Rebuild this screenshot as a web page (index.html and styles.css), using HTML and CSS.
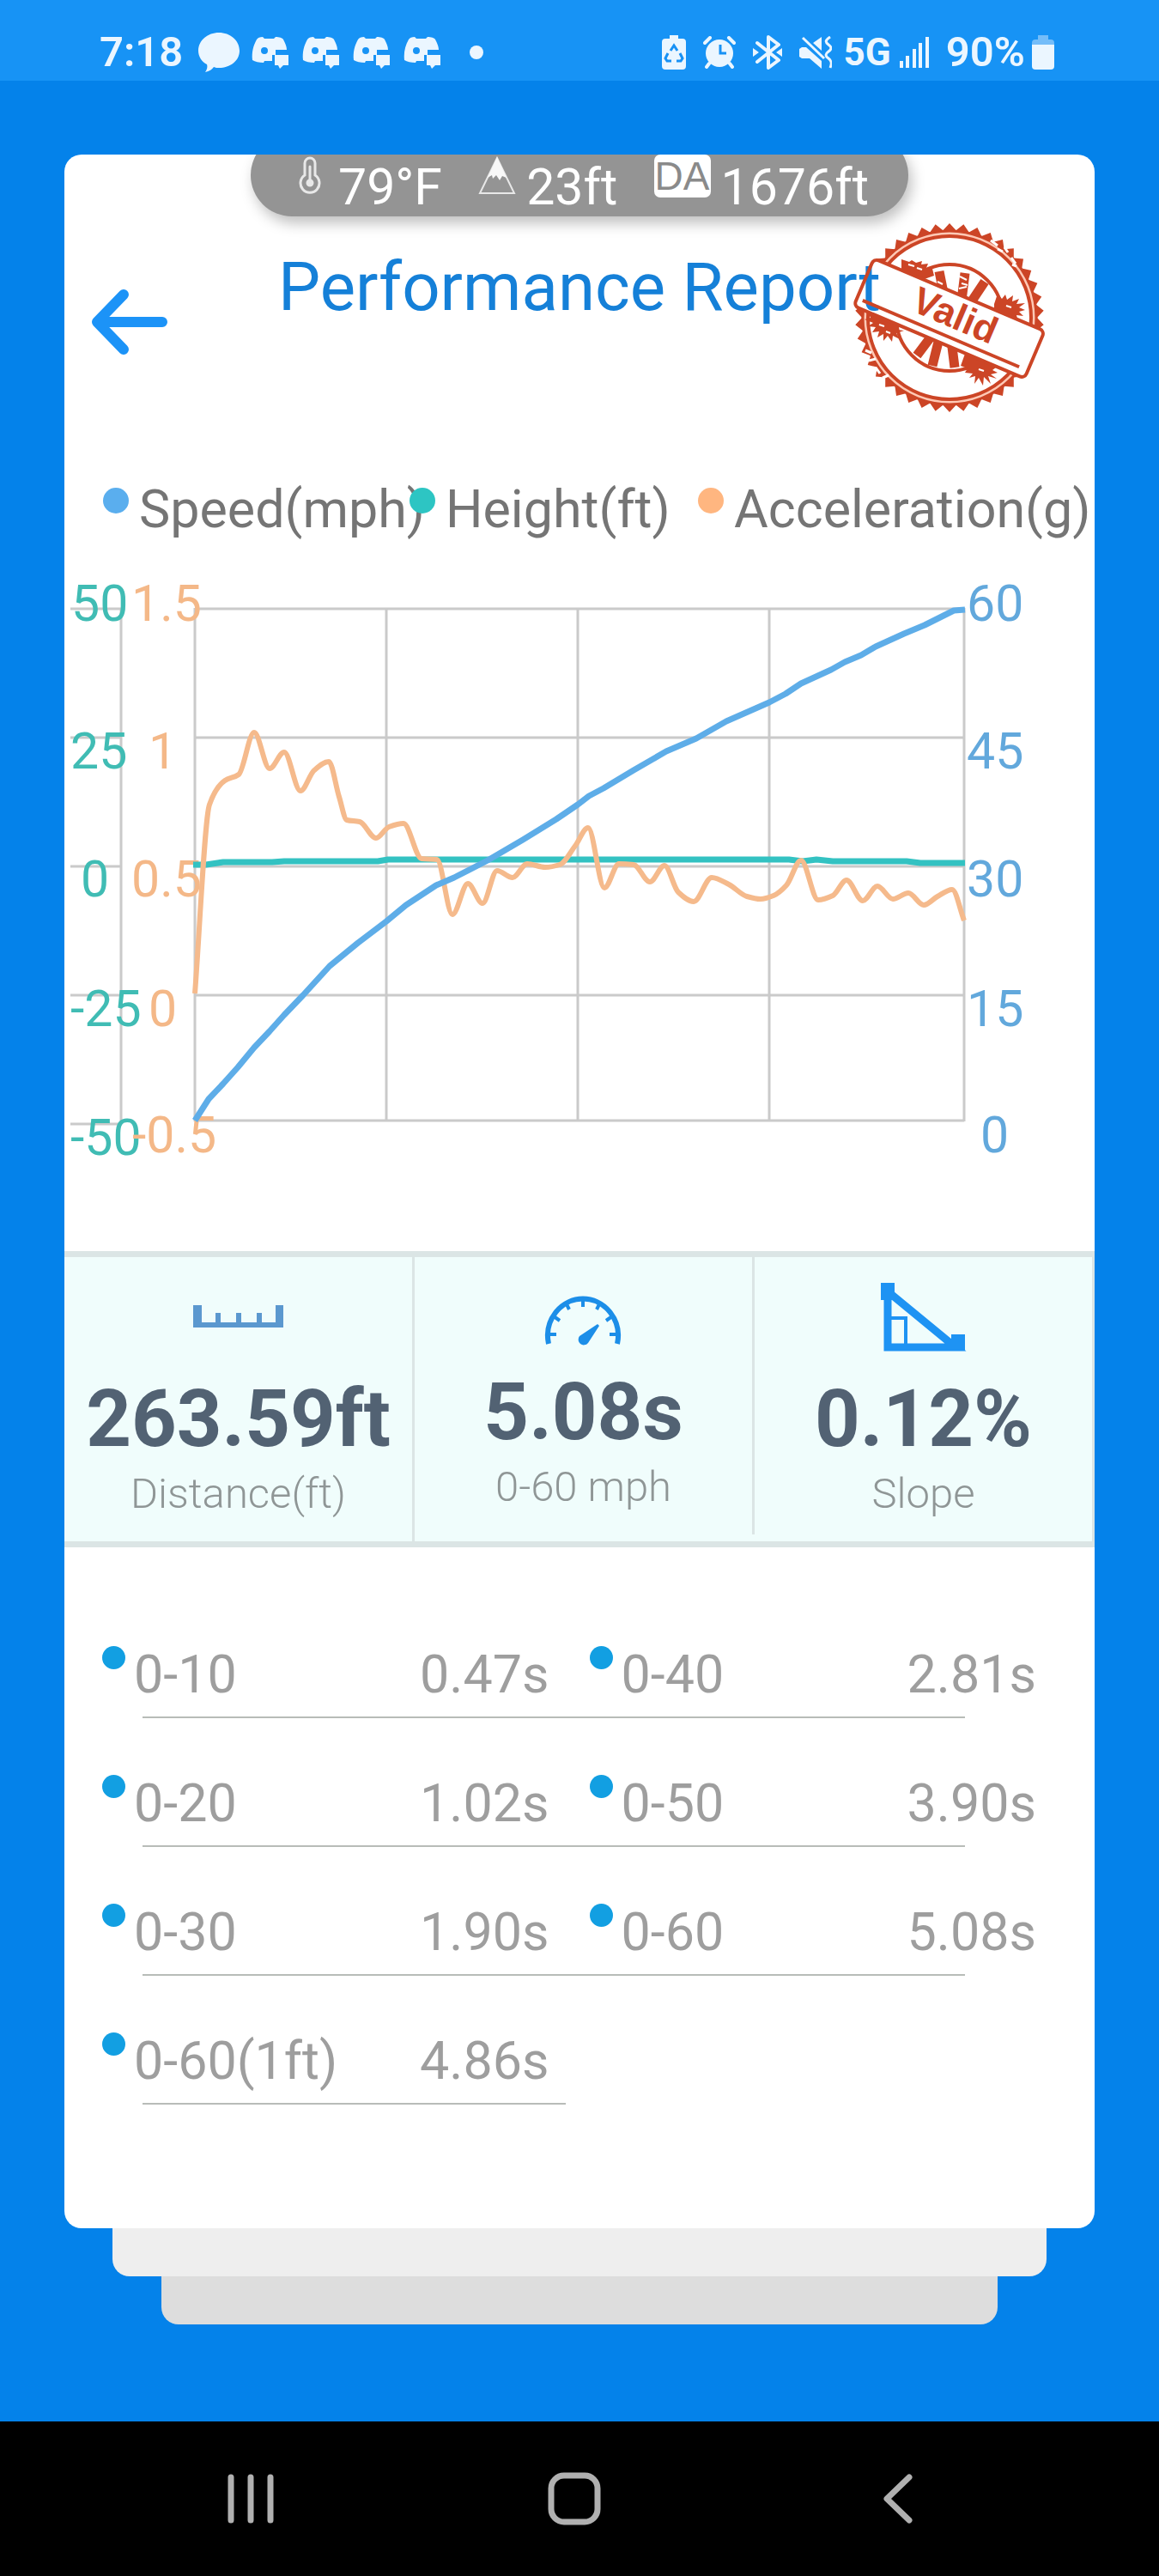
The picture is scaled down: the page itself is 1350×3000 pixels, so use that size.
FILE: index.html
```html
<!DOCTYPE html>
<html lang="en">
<head>
<meta charset="utf-8">
<meta name="viewport" content="width=device-width, initial-scale=1">
<title>Performance Report</title>
<link rel="stylesheet" href="styles.css">
</head>
<body>
<svg class="defs" aria-hidden="true">
  <symbol id="discord" viewBox="0 0 43 38">
    <path fill-rule="evenodd" d="M13 1l2 2h11l2-2c4 0 8 1 9 3 2 4 4 8 4 12H28v6h-4v7h-9l-1 2c-5 0-10-1-13-3C0 19 2 11 6 4c1-2 4-3 7-3zM15 13a4 4 0 1 0 0 8 4 4 0 1 0 0-8z"/>
    <path d="M27 22h16v12h-6l-4 4-2-4h-4z"/>
  </symbol>
</svg>

<header class="status">
  <div class="status-side">
    <span class="status-text">7:18</span>
    <svg class="ico-bubble" viewBox="0 0 48 46"><path d="M24 0c13 0 24 9 24 21S37 41 24 41c-2 0-4 0-6-1-2 3-5 5-10 6 2-3 3-6 2-9C4 34 0 28 0 21 0 9 11 0 24 0z"/></svg>
    <svg class="ico-discord"><use href="#discord"/></svg>
    <svg class="ico-discord"><use href="#discord"/></svg>
    <svg class="ico-discord"><use href="#discord"/></svg>
    <svg class="ico-discord"><use href="#discord"/></svg>
    <span class="more-dot"></span>
  </div>
  <div class="status-side status-right">
    <svg width="28" height="40" viewBox="0 0 28 40"><path d="M9 0h10v4h5a4 4 0 0 1 4 4v28a4 4 0 0 1-4 4H4a4 4 0 0 1-4-4V8a4 4 0 0 1 4-4h5z"/><path d="M10 18l4-6 4 6M21 21l3 6-2 3h-5M11 30H6l-2-3 3-6" fill="none" stroke="#1791f5" stroke-width="3"/></svg>
    <svg width="38" height="38" viewBox="0 0 38 38"><circle cx="19" cy="20" r="16"/><path d="M2 8l6-6M36 8l-6-6M7 32l-3 4M31 32l3 4" fill="none" stroke="#ebf6ff" stroke-width="4" stroke-linecap="round"/><path d="M20 10v10h7" fill="none" stroke="#1791f5" stroke-width="3"/></svg>
    <svg width="34" height="40" viewBox="0 0 34 40"><path d="M5 9l25 20-12 9V2l12 9L5 31" fill="none" stroke="#ebf6ff" stroke-width="4" stroke-linejoin="round" stroke-linecap="round"/><path d="M0 15l7 5-7 5zM34 15l-7 5 7 5z"/></svg>
    <svg width="38" height="38" viewBox="0 0 38 38"><path d="M0 15l3-2h5l18 16v9L12 26H3l-3-2zM16 8l10-7v16z"/><path d="M4 2l25 24" stroke="#ebf6ff" stroke-width="3"/><path d="M36 1c-6 4-6 6-2 9s4 5 0 8-4 5 0 8 4 6 2 11" fill="none" stroke="#ebf6ff" stroke-width="3"/></svg>
    <span class="status-net">5G</span>
    <svg width="34" height="38" viewBox="0 0 34 38"><path d="M2 29v8M9 23v14M17 15v22M24 8v29M32 1v36" stroke="#ebf6ff" stroke-width="4"/></svg>
    <span class="status-text">90%</span>
    <svg class="ico-battery" width="26" height="40" viewBox="0 0 26 40"><path d="M7 0h12v5h3a4 4 0 0 1 4 4v2H0V9a4 4 0 0 1 4-4h3z" fill="#74bdf9"/><path d="M0 11h26v25a4 4 0 0 1-4 4H4a4 4 0 0 1-4-4z"/></svg>
  </div>
</header>

<main class="page">
  <article class="card">
    <div class="weather">
      <span class="weather-item">
        <svg width="26" height="44" viewBox="0 0 26 44" fill="none" stroke="#e8e8e8" stroke-width="3"><path d="M7 22V8a6 6 0 0 1 12 0v14a11 11 0 1 1-12 0z"/><path d="M13 12v18" stroke-linecap="round"/><circle cx="13" cy="31" r="3" fill="#e8e8e8"/></svg>
        79°F</span>
      <span class="weather-item">
        <svg width="44" height="45" viewBox="0 0 44 45"><path d="M22 2L2 43h40z" fill="none" stroke="#e8e8e8" stroke-width="2"/><path d="M22 1l11 24-5-2-3 5-4-6-4 4-1-4-5 3z" fill="#f8f8f8"/></svg>
        23ft</span>
      <span class="weather-item"><span class="badge">DA</span>1676ft</span>
    </div>

    <div class="head">
      <button class="back" type="button" aria-label="Back">
        <svg width="90" height="76" viewBox="0 0 90 76" fill="none" stroke="#1c93f7" stroke-width="12" stroke-linecap="round" stroke-linejoin="round"><path d="M39 6L8 38l31 32M10 38h74" /></svg>
      </button>
      <h1>Performance Report</h1>
      <svg class="stamp" viewBox="-113 -112 226 224" role="img" aria-label="Valid">
        <defs>
          <mask id="outside-band" maskUnits="userSpaceOnUse" x="-115" y="-115" width="230" height="230">
            <rect x="-115" y="-115" width="230" height="230" fill="#fff"/>
            <rect x="-108" y="-30" width="216" height="60" transform="rotate(23)" fill="#000"/>
          </mask>
        </defs>
        <g mask="url(#outside-band)" fill="none" stroke="#cc4526">
          <path id="teeth" fill="#cc4526" stroke="none"/>
          <circle r="98" stroke="#ffc9b5" stroke-width="4"/>
          <circle r="101" stroke-width="3"/>
          <circle r="95" stroke-width="4"/>
          <circle r="62" stroke-width="4"/>
          <path stroke-width="11" d="M-6 -24L-12 -54M14 -20L18 -52M25 -18L41 -42M-20 20L-38 44M-12 24L-20 56M2 26L6 58"/>
          <path stroke="#fff" stroke-width="2" d="M12-48l8 4M14-40l7 2M-14-42l6 3M11-34l9-2"/>
          <g fill="#cc4526" stroke="none">
            <path d="M-56-68l9 3 3-2 5 3 7-2-1 4 8-1-2 5 7 1 2 8-14 5-24-12z"/>
            <path d="M52-16l4-12 5 6 4-5 2 6 7-5-1 7 8-3-3 6 10-1-7 5 7 3-7 2 5 5-8-1 2 8-28-9z"/>
            <path d="M-96-8l40 16-5 6 8 1-9 3 4 7-8-4-1 7-5-7-5 6 0-8-7 4 2-7-8 1 4-6-9-1 6-4-10-4 7-2z"/>
            <path d="M18 42l36 16-4 3 6 3-8 2 7 5-10-3 3 9-8-8-1 10-5-9-5 7 1-9-7 2 4-5-9-1 3-5-8-3z"/>
          </g>
          <path d="M48-90l8 6M56-80l6 3M64-82l4 6M72-70l5 7M78-60l-5-2M-98 38l7 3M-94 50l8-2M-86 58l5 7M-78 70l7-3" stroke="#fff" stroke-width="3"/>
          <path d="M-48-62l7 2M-38-58l6 2M66-14l6 2M-82 8l6 2M-74 16l5 2M34 60l6 2" stroke="#fff" stroke-width="2"/>
        </g>
        <g transform="rotate(23)">
          <rect x="-108" y="-29" width="216" height="60" rx="6" fill="none" stroke="#cc4526" stroke-width="4"/>
          <path d="M-101 21H97" stroke="#cc4526" stroke-width="4"/>
          <text class="stamp-text" x="5" y="10" text-anchor="middle">Valid</text>
        </g>
      </svg>
    </div>

    <ul class="legend">
      <li><span class="dot dot-speed"></span>Speed(mph)</li>
      <li><span class="dot dot-height"></span>Height(ft)</li>
      <li><span class="dot dot-accel"></span>Acceleration(g)</li>
    </ul>

    <svg class="chart" viewBox="75 640 1200 740" role="img" aria-label="Speed, height and acceleration over time">
      <g class="grid">
        <path d="M227 709H1123M227 859H1123M227 1009H1123M227 1159H1123M227 1305H1123"/>
        <path d="M227 708V1306M450 709V1305M673 709V1305M896 709V1305M1123 708V1306"/>
        <path d="M141 709V1309M82 709H141M82 859H141M82 1009H141M82 1159H141M82 1309H141"/>
      </g>
      <g class="axis axis-height">
        <text x="83" y="723">50</text><text x="82" y="895">25</text><text x="94" y="1044">0</text><text x="82" y="1195">-25</text><text x="82" y="1345">-50</text>
      </g>
      <g class="axis axis-accel">
        <text x="153" y="723">1.5</text><text x="173" y="895">1</text><text x="153" y="1044">0.5</text><text x="173" y="1195">0</text><text x="154" y="1342">-0.5</text>
      </g>
      <g class="axis axis-speed">
        <text x="1126" y="723">60</text><text x="1126" y="895">45</text><text x="1126" y="1044">30</text><text x="1126" y="1195">15</text><text x="1142" y="1342">0</text>
      </g>
      <path id="line-height" class="line line-height"/>
      <path id="line-accel" class="line line-accel"/>
      <path id="line-speed" class="line line-speed"/>
    </svg>

    <section class="stats">
      <div class="stat">
        <svg width="110" height="100" viewBox="0 0 110 100"><path d="M2 39h10v20h16V48h6v11h18V48h6v11h18V48h6v11h16V39h9v26H2z" transform="translate(0 -3)" fill="#5b98cf"/></svg>
        <strong>263.59ft</strong><span>Distance(ft)</span>
      </div>
      <div class="stat stat-short">
        <svg width="110" height="100" viewBox="0 0 110 100" fill="none" stroke="#1c8ee8"><path d="M14 89A41 43 0 1 1 94 89" stroke-width="6"/><path d="M15 78h8M20 57l7 5M34 41l4 8M54 35v11M74 41l-4 8M88 57l-7 5M93 78h-8" stroke-width="4"/><path d="M71 66l2 2-13 20a6 6 0 1 1-10-8z" fill="#1c8ee8" stroke="none"/></svg>
        <strong>5.08s</strong><span>0-60 mph</span>
      </div>
      <div class="stat">
        <svg width="110" height="100" viewBox="0 0 110 100" fill="none" stroke="#1e93f3"><path d="M13 18V85H92L13 20" stroke-width="9"/><path d="M15 51h19v32" stroke-width="4"/><path d="M5 10h16v20H5zM87 70h16v19H87z" fill="#1e93f3" stroke="none"/></svg>
        <strong>0.12%</strong><span>Slope</span>
      </div>
    </section>

    <ul class="splits">
      <li><div><i class="dot"></i><span>0-10</span><b>0.47s</b></div><div><i class="dot"></i><span>0-40</span><b>2.81s</b></div></li>
      <li><div><i class="dot"></i><span>0-20</span><b>1.02s</b></div><div><i class="dot"></i><span>0-50</span><b>3.90s</b></div></li>
      <li><div><i class="dot"></i><span>0-30</span><b>1.90s</b></div><div><i class="dot"></i><span>0-60</span><b>5.08s</b></div></li>
      <li><div><i class="dot"></i><span>0-60(1ft)</span><b>4.86s</b></div></li>
    </ul>
  </article>
  <div class="sheet sheet-near"></div>
  <div class="sheet sheet-far"></div>
</main>

<nav class="nav" aria-label="System navigation">
  <button type="button" aria-label="Recent apps"><svg width="62" height="62" viewBox="0 0 62 62"><path d="M8 6v50M31 6v50M54 6v50"/></svg></button>
  <button type="button" aria-label="Home"><svg width="62" height="62" viewBox="0 0 62 62"><rect x="4" y="4" width="54" height="54" rx="15"/></svg></button>
  <button type="button" aria-label="Back"><svg width="62" height="62" viewBox="0 0 62 62"><path d="M44 6L18 31l26 25"/></svg></button>
</nav>
<script src="chart.js"></script>
</body>
</html>
```
FILE: styles.css
```css
* { box-sizing: border-box; }
body {
  margin: 0;
  min-height: 100vh;
  display: flex;
  flex-direction: column;
  background: #0482ea;
  font-family: Roboto, "Liberation Sans", sans-serif;
}
ul { list-style: none; margin: 0; padding: 0; }
button { border: 0; padding: 0; background: none; display: flex; cursor: pointer; }
svg { display: block; flex: none; }
.defs { position: absolute; width: 0; height: 0; }

/* Status bar */
.status {
  height: 94px;
  padding: 28px 122px 0 116px;
  display: flex;
  justify-content: space-between;
  background: #1793f5;
  color: #ebf6ff;
  fill: #ebf6ff;
}
.status-side { display: flex; align-items: center; height: 66px; gap: 16px; }
.status-text { font-size: 49px; font-weight: 600; line-height: 66px; }
.ico-bubble { width: 48px; height: 46px; margin-left: 2px; }
.ico-discord { width: 43px; height: 38px; margin-left: -2px; margin-right: 2px; }
.more-dot { width: 16px; height: 16px; border-radius: 50%; background: #ebf6ff; margin-left: 16px; }
.status-right { gap: 20px; }
.status-net { font-size: 44px; font-weight: 700; margin-right: -10px; margin-left: -6px; }
.ico-battery { margin-left: -12px; }

/* Card */
.page { padding: 86px 75px 113px; }
.card { background: #fff; border-radius: 20px; overflow: hidden; }
.weather {
  width: 766px;
  max-width: 100%;
  height: 96px;
  margin: -24px auto 0;
  padding: 24px 46px 0 56px;
  display: flex;
  justify-content: space-between;
  border-radius: 48px;
  background: #949494;
  box-shadow: 4px 8px 16px rgba(0, 0, 0, .25);
  color: #fff;
  font-size: 59px;
  line-height: 76px;
}
.weather-item { display: flex; gap: 12px; white-space: nowrap; }
.weather-item:first-child { gap: 20px; }
.weather-item svg { margin-top: 2px; }
.badge {
  width: 66px;
  height: 50px;
  border-radius: 7px;
  background: #fff;
  color: #8a8a8a;
  font: 46px/50px "Liberation Sans", Arial, sans-serif;
  text-align: center;
}
.head {
  position: relative;
  display: flex;
  align-items: flex-end;
  height: 123px;
  margin-top: 38px;
  padding-left: 30px;
}
.head h1 {
  flex: 1;
  align-self: flex-start;
  margin: 0;
  padding-right: 120px;
  text-align: center;
  font-size: 78px;
  font-weight: 400;
  line-height: 90px;
  color: #1580d8;
  white-space: nowrap;
}
.stamp { position: absolute; right: 56px; top: -32px; width: 226px; height: 224px; }
.stamp-text { font: bold 44px "Liberation Sans", Arial, sans-serif; fill: #cc4526; }

.dot { flex: none; border-radius: 50%; }
.legend {
  display: grid;
  grid-template-columns: 357px 336px 1fr;
  padding-left: 45px;
  margin-top: 145px;
  color: #757575;
  font-size: 61px;
  line-height: 70px;
}
.legend li { display: flex; gap: 12px; min-width: 0; white-space: nowrap; }
.legend .dot { width: 30px; height: 30px; margin-top: 10px; position: relative; }
.dot-speed { background: #5aaeee; }
.dot-height { background: #2dc5c3; }
.dot-accel { background: #ffb680; }

/* Chart */
.chart { width: 100%; height: auto; margin: 12px 0 77px; }
.grid { fill: none; stroke: #cacaca; stroke-width: 3; }
.axis { font-size: 59px; }
.axis-height { fill: #40bcb4; }
.axis-accel { fill: #f4b888; }
.axis-speed { fill: #62a8dc; }
.line { fill: none; stroke-linejoin: round; }
.line-height { stroke: #33c2c2; stroke-width: 7; }
.line-accel { stroke: #f5ba8c; stroke-width: 6; }
.line-speed { stroke: #5eade8; stroke-width: 7; }

/* Key figures */
.stats {
  display: grid;
  grid-template-columns: 408fr 396fr 396fr;
  border-top: 7px solid #dbe5e5;
  border-bottom: 7px solid #dbe5e5;
  background: #f0fdfc;
}
.stat {
  height: 331px;
  display: flex;
  flex-direction: column;
  align-items: center;
  justify-content: flex-end;
  padding-bottom: 26px;
  border-right: 3px solid #dbe5e5;
}
.stat-short { height: 323px; }
.stat strong { margin: 15px 0 4px; font-size: 92px; line-height: 108px; font-weight: 700; color: #526273; }
.stat span { font-size: 49px; line-height: 58px; font-weight: 300; color: #8f9696; }

/* Split times */
.splits { padding: 49px 0 144px; color: #9e9e9e; font-size: 61px; line-height: 70px; }
.splits li { display: grid; grid-template-columns: 1fr 1fr; column-gap: 47px; padding: 64px 68px 0 44px; }
.splits li::after { content: ""; grid-column: 1 / -1; height: 2px; margin: 14px 83px 0 47px; background: #b8bcb8; }
.splits li:last-child::after { margin-right: 548px; }
.splits div { display: flex; gap: 10px; }
.splits .dot { width: 27px; height: 27px; margin-top: 2px; background: #129fe2; }
.splits b { margin-left: auto; font-weight: 400; }

.sheet { height: 56px; border-radius: 0 0 20px 20px; }
.sheet-near { margin: 0 56px; background: #eee; }
.sheet-far { margin: 0 113px; background: #ddd; }

/* System navigation */
.nav {
  height: 180px;
  margin-top: auto;
  padding: 0 115px 0 103px;
  display: grid;
  grid-template-columns: repeat(3, 1fr);
  align-items: center;
  justify-items: center;
  background: #000;
}
.nav svg { fill: none; stroke: #b0b0b0; stroke-width: 7; stroke-linecap: round; stroke-linejoin: round; }
```
FILE: chart.js
```js
const speed = [[227,1305],[243,1280],[260,1262],[277,1243],[296,1220],[314,1201],[331,1182],[353,1159],[384,1125],[417,1098],[450,1073],[473,1054],[508,1031],[529,1022],[568,1002],[609,978],[648,954],[673,937],[686,927],[703,918],[738,897],[776,875],[811,860],[846,840],[896,818],[915,808],[933,796],[968,780],[984,771],[1003,763],[1020,753],[1053,738],[1077,728],[1111,711],[1124,710]];
const height = [[225,1007],[240,1007],[260,1004],[317,1004],[331,1003],[440,1003],[452,1001],[919,1001],[935,1003],[951,1001],[970,1003],[1056,1003],[1072,1005],[1124,1005]];
const accel = [[227,1157],[244,937],[262,909],[278,902],[296,853],[314,895],[331,876],[350,921],[366,897],[383,887],[395,928],[404,955],[419,957],[438,976],[453,963],[470,959],[491,1000],[509,1001],[527,1065],[545,1029],[562,1052],[579,1014],[597,1022],[614,1006],[635,1010],[652,1007],[670,985],[685,964],[704,1034],[721,1006],[738,1007],[757,1027],[774,1008],[790,1039],[808,1050],[829,1022],[849,1030],[870,1044],[886,1047],[901,1043],[916,1031],[933,1002],[953,1048],[970,1043],[986,1025],[1005,1049],[1022,1032],[1040,1047],[1058,1040],[1076,1054],[1092,1044],[1109,1036],[1123,1072]];

const straight = pts => 'M' + pts.map(p => p.join(' ')).join('L');

// Monotone cubic curve: flat at every local peak and dip.
function smooth(pts) {
  const slope = i => (pts[i + 1][1] - pts[i][1]) / (pts[i + 1][0] - pts[i][0]);
  const tangent = pts.map((p, i) => {
    if (i === 0) return slope(0);
    if (i === pts.length - 1) return slope(i - 1);
    const a = slope(i - 1), b = slope(i);
    return a * b <= 0 ? 0 : 2 * a * b / (a + b);
  });
  let d = 'M' + pts[0].join(' ');
  for (let i = 1; i < pts.length; i++) {
    const [x0, y0] = pts[i - 1], [x1, y1] = pts[i], h = (x1 - x0) / 3;
    d += `C${x0 + h} ${y0 + h * tangent[i - 1]} ${x1 - h} ${y1 - h * tangent[i]} ${x1} ${y1}`;
  }
  return d;
}

document.getElementById('line-speed').setAttribute('d', straight(speed));
document.getElementById('line-height').setAttribute('d', straight(height));
document.getElementById('line-accel').setAttribute('d', smooth(accel));

// Saw-tooth rim of the stamp.
const teeth = 42;
let rim = '';
for (let i = 0; i < teeth * 2; i++) {
  const r = i % 2 ? 110 : 102, a = Math.PI * i / teeth;
  rim += (i ? 'L' : 'M') + r * Math.cos(a) + ' ' + r * Math.sin(a);
}
rim += 'ZM100 0A100 100 0 1 0 -100 0A100 100 0 1 0 100 0Z';
document.getElementById('teeth').setAttribute('d', rim);
document.getElementById('teeth').setAttribute('fill-rule', 'evenodd');
```
